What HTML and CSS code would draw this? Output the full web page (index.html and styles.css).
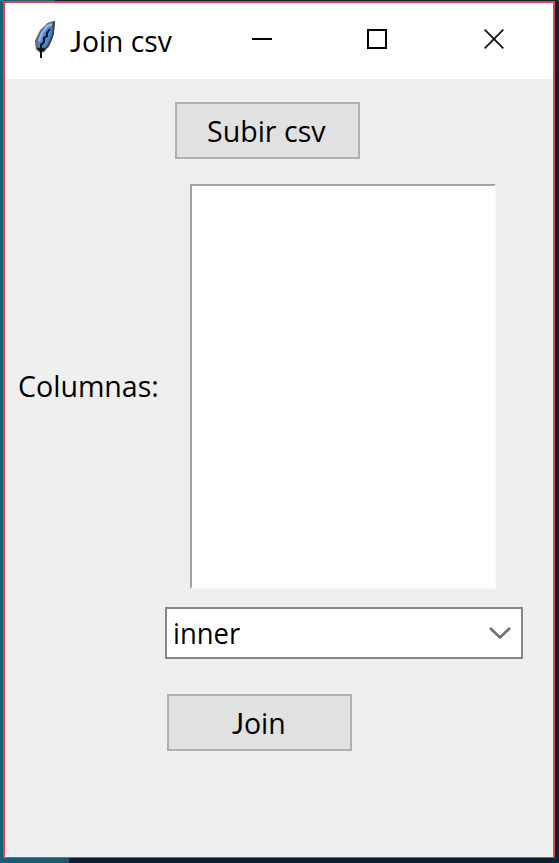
FILE: index.html
```html
<!DOCTYPE html>
<html lang="es">
<head>
<meta charset="utf-8">
<title>Join csv</title>
<link rel="stylesheet" href="styles.css">
</head>
<body>
<main class="window">
  <header class="titlebar">
    <svg class="feather" width="22" height="40" viewBox="0 0 22 40">
      <path d="M20 2 L14 4 L7 11 L2 21 L3 29 L7 32 L14 26 L18 17 Z" fill="#4a88d4" stroke="#666" stroke-width="2.2"/>
      <path d="M18 4 L13 6 L8 13 L5 21" fill="none" stroke="#8dbaf0" stroke-width="2.4"/>
      <path d="M20 2 L19 14 L15 24 L9 32" fill="none" stroke="#3b3f45" stroke-width="1.8"/>
      <path d="M16 9 L13 13 L13 16 L10 18 L10 22 L7 25 L7 38" fill="none" stroke="#10151d" stroke-width="2"/>
      <path d="M4 28 L7 31 L10 28" fill="none" stroke="#111" stroke-width="2"/>
    </svg>
    <h1 class="title"><span class="title-text"><span class="initial">J</span>oin csv</span></h1>
    <svg class="control minimize" width="20" height="20" viewBox="0 0 20 20"><path d="M0 10H20" stroke="#000" stroke-width="2"/></svg>
    <svg class="control maximize" width="20" height="20" viewBox="0 0 20 20"><rect x="1" y="1" width="18" height="18" fill="none" stroke="#000" stroke-width="2"/></svg>
    <svg class="control close" width="20" height="20" viewBox="0 0 20 20"><path d="M.7.7L19.3 19.3M19.3.7L.7 19.3" stroke="#111" stroke-width="1.8"/></svg>
  </header>
  <section class="content">
    <button class="button upload"><span class="upload-text">Subir csv</span></button>
    <div class="columns">
      <label class="label"><span class="label-text">Columnas:</span></label>
      <div class="listbox"></div>
    </div>
    <div class="combo">
      <span class="combo-text">inner</span>
      <svg class="chevron" width="22" height="14" viewBox="0 0 22 14"><path d="M1 2L11 11.5L21 2" fill="none" stroke="#707070" stroke-width="2.7"/></svg>
    </div>
    <button class="button join"><span class="join-text"><span class="initial">J</span>oin</span></button>
  </section>
</main>
</body>
</html>
```
FILE: styles.css
```css
* { box-sizing: border-box; }
body {
  margin: 0;
  height: 863px;
  padding: 1px 4px 0 3px;
  overflow: hidden;
  font-family: "Open Sans", "Noto Sans", sans-serif;
  color: #000;
  background:
    linear-gradient(#1a6178, #1a6178) 0 0 / 4px 863px no-repeat,
    linear-gradient(#1a6178, #1a6178) 0 0 / 55px 4px no-repeat,
    linear-gradient(90deg, #176078, #1a5a6c) 0 857px / 69px 6px no-repeat,
    #0c1f33;
}
.window {
  height: 857px;
  border: 2px solid #d9474c;
  border-bottom-width: 1px;
  background: #efefef;
}
.titlebar {
  display: flex;
  height: 76px;
  background: #fff;
}
.feather { flex: none; margin: 17px 0 0 29px; }
.title {
  flex: none;
  width: 195px;
  margin: 18px 0 0 14px;
  font-size: 29px;
  font-weight: 400;
  line-height: 40px;
  white-space: nowrap;
}
.title-text, .upload-text, .label-text, .combo-text, .join-text {
  display: inline-block;
  transform-origin: left center;
  white-space: nowrap;
}
.initial { font-family: Lato, sans-serif; line-height: 1; }
.title-text { transform: scaleX(.975); }
.join-text { transform: scaleX(.98); }
.upload-text { transform: scaleX(.985); }
.label-text { transform: scaleX(.985); }
.combo-text { transform: scaleX(.945); }
.control { flex: none; margin-top: 26px; }
.minimize { margin-left: -13px; }
.maximize { margin-left: 95px; }
.close { margin-left: 97px; }
.content { display: flex; flex-direction: column; align-items: flex-start; }
.button {
  display: block;
  width: 185px;
  height: 57px;
  padding: 0;
  border: 2px solid #b0b0b0;
  background: #e1e1e1;
  color: #000;
  font: 29px/40px "Open Sans", "Noto Sans", sans-serif;
  text-align: left;
}
.upload { margin: 23px 0 0 170px; padding-left: 30px; }
.columns { display: flex; align-items: center; margin-top: 25px; }
.label {
  width: 185px;
  padding: 0 0 2px 13px;
  font-size: 29px;
  line-height: 40px;
}
.listbox {
  width: 306px;
  height: 405px;
  border-style: solid;
  border-width: 2px;
  border-color: #a2a2a2 #fafafa #fafafa #a2a2a2;
  background: #fff;
}
.combo {
  display: flex;
  align-items: center;
  justify-content: space-between;
  width: 358px;
  height: 52px;
  margin: 18px 0 0 160px;
  padding: 0 10px 0 6px;
  border: 2px solid #868686;
  background: #fff;
  font-size: 29px;
  line-height: 40px;
}
.join { margin: 35px 0 0 162px; padding-left: 63px; }
```
